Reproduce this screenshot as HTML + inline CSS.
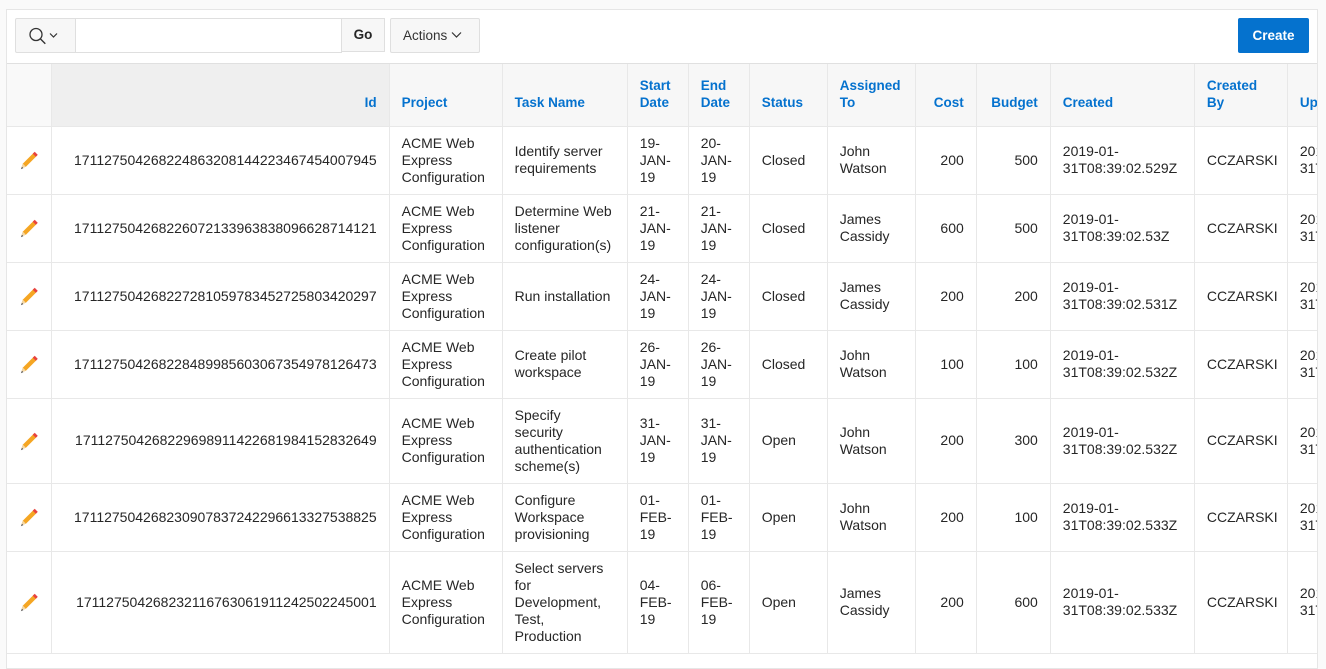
<!DOCTYPE html>
<html><head><meta charset="utf-8"><style>
*{box-sizing:border-box}
body{margin:0;width:1326px;height:653px;overflow:hidden;background:#fafafa;font-family:"Liberation Sans",Arial,sans-serif;font-size:13px;color:#262626}
.wrap{position:absolute;left:6px;top:9px;width:1312px;height:660px;background:#fff;border:1px solid #e6e6e6;overflow:hidden}
.bar{position:absolute;left:0;top:0;width:1310px;height:54px;border-bottom:1px solid #e0e0e0;background:#fff}
.sbtn{position:absolute;left:8px;top:8px;width:61px;height:35px;background:#f7f7f7;border:1px solid #dfdfdf;border-radius:2px 0 0 2px}
.inp{position:absolute;left:68px;top:8px;width:267px;height:35px;border:1px solid #dfdfdf;background:#fff}
.go{position:absolute;left:334px;top:8px;width:44px;height:34px;background:#f7f7f7;border:1px solid #dfdfdf;font-weight:bold;text-align:center;line-height:32px;font-size:13.5px}
.act{position:absolute;left:383px;top:8px;width:90px;height:35px;background:#f7f7f7;border:1px solid #dfdfdf;border-radius:2px;line-height:33px;padding-left:12px;font-size:13.5px;color:#333}
.create{position:absolute;left:1231px;top:8px;width:71px;height:35px;background:#0572ce;color:#fff;font-weight:bold;border-radius:2px;text-align:center;line-height:35px;font-size:13.5px}
table{position:absolute;left:0;top:54px;border-collapse:collapse;table-layout:fixed;width:1400px}
th,td{border:1px solid #e8e8e8;padding:0 12px;white-space:nowrap;line-height:17px;vertical-align:middle;text-align:left;font-size:14px}
th{height:62px;background:#f7f7f7;color:#0572ce;font-weight:bold;vertical-align:bottom;padding-bottom:15px;font-size:13.5px}
th.id{background:#efefef;text-align:right}
th.e{background:#f9f9f9}
td.r{text-align:right}
td.e{padding:0;text-align:center}
tr:first-child th{border-top:none}
th:first-child,td:first-child{border-left:none}
</style></head><body>
<div class="wrap">
<div class="bar">
 <div class="sbtn"><svg width="61" height="35" viewBox="0 0 61 35"><circle cx="20" cy="15.5" r="6" fill="none" stroke="#333" stroke-width="1.3"/><path d="M24.3 19.8l5 5" stroke="#333" stroke-width="1.4"/><path d="M34 14.5l3.5 3.5 3.5-3.5" fill="none" stroke="#333" stroke-width="1.2"/></svg></div>
 <div class="inp"></div>
 <div class="go">Go</div>
 <div class="act">Actions <svg width="11" height="8" viewBox="0 0 11 8" style="vertical-align:1px"><path d="M1 1.5l4.5 4.5 4.5-4.5" fill="none" stroke="#333" stroke-width="1.2"/></svg></div>
 <div class="create">Create</div>
</div>
<table>
<colgroup><col style="width:44px"><col style="width:338px"><col style="width:113px"><col style="width:125px"><col style="width:61px"><col style="width:61px"><col style="width:78px"><col style="width:88px"><col style="width:61px"><col style="width:74px"><col style="width:144px"><col style="width:93px"><col style="width:119px"></colgroup>
<tr><th class="e"></th><th class="id">Id</th><th>Project</th><th>Task Name</th><th>Start<br>Date</th><th>End<br>Date</th><th>Status</th><th>Assigned<br>To</th><th style="text-align:right">Cost</th><th style="text-align:right">Budget</th><th>Created</th><th>Created<br>By</th><th>Updated</th></tr>
<tr style="height:68px"><td class="e">P</td><td class="r">171127504268224863208144223467454007945</td><td>ACME Web<br>Express<br>Configuration</td><td>Identify server<br>requirements</td><td>19-<br>JAN-<br>19</td><td>20-<br>JAN-<br>19</td><td>Closed</td><td>John<br>Watson</td><td class="r">200</td><td class="r">500</td><td>2019-01-<br>31T08:39:02.529Z</td><td>CCZARSKI</td><td>2019-01-<br>31T08:39</td></tr>
<tr style="height:68px"><td class="e">P</td><td class="r">171127504268226072133963838096628714121</td><td>ACME Web<br>Express<br>Configuration</td><td>Determine Web<br>listener<br>configuration(s)</td><td>21-<br>JAN-<br>19</td><td>21-<br>JAN-<br>19</td><td>Closed</td><td>James<br>Cassidy</td><td class="r">600</td><td class="r">500</td><td>2019-01-<br>31T08:39:02.53Z</td><td>CCZARSKI</td><td>2019-01-<br>31T08:39</td></tr>
<tr style="height:68px"><td class="e">P</td><td class="r">171127504268227281059783452725803420297</td><td>ACME Web<br>Express<br>Configuration</td><td>Run installation</td><td>24-<br>JAN-<br>19</td><td>24-<br>JAN-<br>19</td><td>Closed</td><td>James<br>Cassidy</td><td class="r">200</td><td class="r">200</td><td>2019-01-<br>31T08:39:02.531Z</td><td>CCZARSKI</td><td>2019-01-<br>31T08:39</td></tr>
<tr style="height:68px"><td class="e">P</td><td class="r">171127504268228489985603067354978126473</td><td>ACME Web<br>Express<br>Configuration</td><td>Create pilot<br>workspace</td><td>26-<br>JAN-<br>19</td><td>26-<br>JAN-<br>19</td><td>Closed</td><td>John<br>Watson</td><td class="r">100</td><td class="r">100</td><td>2019-01-<br>31T08:39:02.532Z</td><td>CCZARSKI</td><td>2019-01-<br>31T08:39</td></tr>
<tr style="height:85px"><td class="e">P</td><td class="r">171127504268229698911422681984152832649</td><td>ACME Web<br>Express<br>Configuration</td><td>Specify<br>security<br>authentication<br>scheme(s)</td><td>31-<br>JAN-<br>19</td><td>31-<br>JAN-<br>19</td><td>Open</td><td>John<br>Watson</td><td class="r">200</td><td class="r">300</td><td>2019-01-<br>31T08:39:02.532Z</td><td>CCZARSKI</td><td>2019-01-<br>31T08:39</td></tr>
<tr style="height:68px"><td class="e">P</td><td class="r">171127504268230907837242296613327538825</td><td>ACME Web<br>Express<br>Configuration</td><td>Configure<br>Workspace<br>provisioning</td><td>01-<br>FEB-<br>19</td><td>01-<br>FEB-<br>19</td><td>Open</td><td>John<br>Watson</td><td class="r">200</td><td class="r">100</td><td>2019-01-<br>31T08:39:02.533Z</td><td>CCZARSKI</td><td>2019-01-<br>31T08:39</td></tr>
<tr style="height:102px"><td class="e">P</td><td class="r">171127504268232116763061911242502245001</td><td>ACME Web<br>Express<br>Configuration</td><td>Select servers<br>for<br>Development,<br>Test,<br>Production</td><td>04-<br>FEB-<br>19</td><td>06-<br>FEB-<br>19</td><td>Open</td><td>James<br>Cassidy</td><td class="r">200</td><td class="r">600</td><td>2019-01-<br>31T08:39:02.533Z</td><td>CCZARSKI</td><td>2019-01-<br>31T08:39</td></tr>
</table>
</div>
<script>
var svg='<svg width="22" height="22" viewBox="0 0 20 20" style="display:block;margin:auto"><path d="M3 17.5l1.4-4.2 10-10 2.8 2.8-10 10z" fill="#f5a623"/><path d="M13.4 4.3l1.8-1.8 2.8 2.8-1.8 1.8z" fill="#e8423f"/><path d="M3 17.5l1.4-4.2 2.8 2.8z" fill="#f3d6a4"/><path d="M2.6 18.4l1-2.3 1.3 1.3z" fill="#555"/></svg>';
document.querySelectorAll('td.e').forEach(function(t){t.innerHTML=svg;});
</script>
</body></html>
